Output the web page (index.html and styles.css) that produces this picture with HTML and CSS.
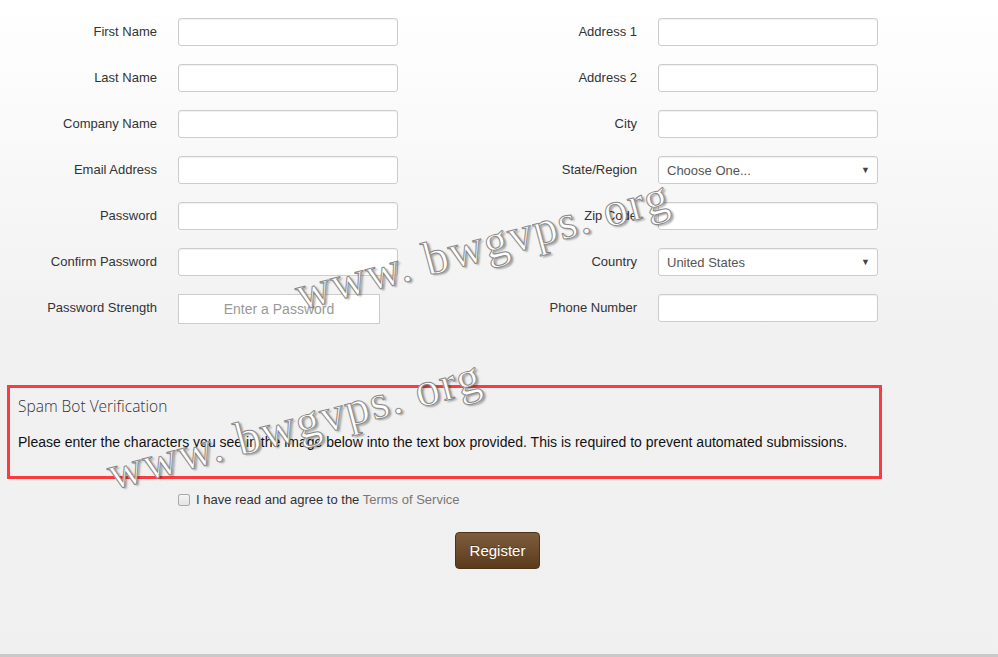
FILE: index.html
```html
<!DOCTYPE html>
<html>
<head>
<meta charset="utf-8">
<link rel="stylesheet" href="styles.css">
</head>
<body>
<div class="page">
  <form class="reg">
    <div class="grid">
      <label class="lbl">First Name</label><input class="field" type="text">
      <label class="lbl">Address 1</label><input class="field" type="text">

      <label class="lbl">Last Name</label><input class="field" type="text">
      <label class="lbl">Address 2</label><input class="field" type="text">

      <label class="lbl">Company Name</label><input class="field" type="text">
      <label class="lbl">City</label><input class="field" type="text">

      <label class="lbl">Email Address</label><input class="field" type="text">
      <label class="lbl">State/Region</label>
      <div class="field select"><span>Choose One...</span><span class="arrow">▼</span></div>

      <label class="lbl">Password</label><input class="field" type="password">
      <label class="lbl">Zip Code</label><input class="field" type="text">

      <label class="lbl">Confirm Password</label><input class="field" type="password">
      <label class="lbl">Country</label>
      <div class="field select"><span>United States</span><span class="arrow">▼</span></div>

      <label class="lbl">Password Strength</label><div class="strength">Enter a Password</div>
      <label class="lbl">Phone Number</label><input class="field" type="text">
    </div>

    <div class="spam">
      <div class="spam-title">Spam Bot Verification</div>
      <p class="spam-text">Please enter the characters you see in the image below into the text box provided. This is required to prevent automated submissions.</p>
    </div>

    <div class="agree">
      <span class="check"></span>
      <span>I have read and agree to the <a class="tos">Terms of Service</a></span>
    </div>

    <div class="actions">
      <button type="button" class="btn">Register</button>
    </div>
  </form>

  <div class="wm wm1">www. bwgvps. org</div>
  <div class="wm wm2">www. bwgvps. org</div>
</div>
</body>
</html>
```

FILE: styles.css
```css
* { box-sizing: border-box; }
html, body { margin: 0; padding: 0; }
body {
  font-family: "Liberation Sans", Arial, sans-serif;
  font-size: 13px;
  color: #333;
  background: #f0f0f0;
}
.page {
  position: relative;
  height: 657px;
  overflow: hidden;
  background: linear-gradient(#ffffff 0px, #f1f1f1 330px, #f0f0f0 657px);
  border-bottom: 3px solid #c9c9c9;
}
.reg { padding-top: 18px; }
.grid {
  display: grid;
  grid-template-columns: 157px 220px 218px 220px;
  grid-auto-rows: 28px;
  column-gap: 21px;
  row-gap: 18px;
}
.lbl {
  text-align: right;
  line-height: 28px;
  white-space: nowrap;
  color: #333;
}
.field {
  height: 28px;
  width: 220px;
  border: 1px solid #ccc;
  border-radius: 3px;
  background: #fff;
  box-shadow: inset 0 1px 1px rgba(0,0,0,0.06);
  font: inherit;
  padding: 0 8px;
}
.select {
  display: flex;
  align-items: center;
  justify-content: space-between;
  color: #555;
  font-size: 13px;
}
.arrow { font-size: 9px; color: #444; margin-right: -1px; }
.strength {
  width: 202px;
  height: 30px;
  border: 1px solid #ccc;
  background: #fff;
  color: #999;
  font-size: 14px;
  text-align: center;
  line-height: 28px;
}
.spam {
  margin: 63px 0 0 7px;
  width: 875px;
  height: 94px;
  border: 3px solid #fa3b3f;
  padding: 7px 8px 0 8px;
}
.spam-title {
  font-family: "Open Sans", sans-serif;
  font-weight: 300;
  font-size: 15.5px;
  color: #333;
  line-height: 22px;
}
.spam-text {
  margin: 16px 0 0;
  font-size: 14px;
  color: #111;
  line-height: 18px;
}
.agree {
  margin: 12px 0 0 178px;
  display: flex;
  align-items: center;
  gap: 6px;
  color: #333;
  line-height: 18px;
}
.check {
  width: 12px;
  height: 12px;
  border: 1px solid #a9a9a9;
  border-radius: 2px;
  background: linear-gradient(#f5f5f5, #e3e3e3);
}
.tos { color: #777; text-decoration: none; }
.actions {
  margin-top: 23px;
  display: flex;
  padding-left: 455px;
}
.btn {
  width: 85px;
  height: 37px;
  border: 1px solid #4e3218;
  border-radius: 4px;
  background: linear-gradient(#7c5d3d, #5c3b1c);
  color: #fff;
  font-family: "Liberation Sans", Arial, sans-serif;
  font-size: 15px;
  padding: 0;
  text-shadow: 0 -1px 0 rgba(0,0,0,0.25);
}
.wm {
  position: absolute;
  font-family: "Liberation Serif", "Times New Roman", serif;
  font-size: 48px;
  line-height: 48px;
  letter-spacing: 1.5px;
  white-space: pre;
  color: #fff;
  -webkit-text-stroke: 1px #8a8a8a;
  text-shadow: 2px 2px 2px rgba(0,0,0,0.35);
  transform: rotate(-15deg);
  transform-origin: 0 80%;
  pointer-events: none;
}
.wm1 { left: 300px; top: 270px; }
.wm2 { left: 112px; top: 450px; }
```
